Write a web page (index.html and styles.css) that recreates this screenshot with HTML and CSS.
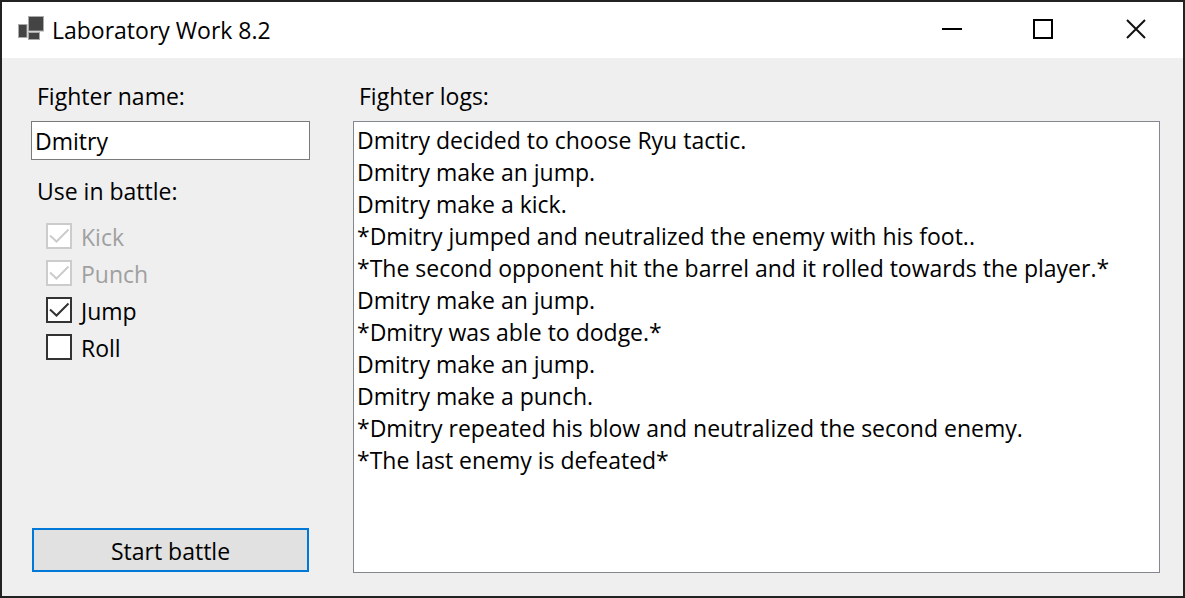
FILE: index.html
```html
<!DOCTYPE html>
<html lang="en">
<head>
<meta charset="utf-8">
<title>Laboratory Work 8.2</title>
<link rel="stylesheet" href="styles.css">
</head>
<body>
<div class="window">
  <header class="titlebar">
    <svg class="app-icon" width="26" height="24" viewBox="0 0 26 24" aria-hidden="true">
      <g fill="#444" stroke="#aaa" stroke-width="1">
        <rect x="0.5" y="8.5" width="8.5" height="13"/>
        <rect x="10.5" y="0.5" width="15" height="14.5"/>
        <rect x="10.5" y="16.5" width="11" height="7"/>
      </g>
    </svg>
    <h1 class="title">Laboratory Work 8.2</h1>
    <div class="controls">
      <button class="control" type="button" aria-label="Minimize">
        <svg width="22" height="22" viewBox="0 0 22 22"><path d="M1 11H21" stroke="#000" stroke-width="2"/></svg>
      </button>
      <button class="control" type="button" aria-label="Maximize">
        <svg width="22" height="22" viewBox="0 0 22 22"><rect x="1" y="2" width="18" height="18" fill="none" stroke="#000" stroke-width="2"/></svg>
      </button>
      <button class="control" type="button" aria-label="Close">
        <svg width="22" height="22" viewBox="0 0 22 22"><path d="M2 2L20 20M20 2L2 20" stroke="#111" stroke-width="2"/></svg>
      </button>
    </div>
  </header>
  <main class="content">
    <form class="panel">
      <label class="label" for="name">Fighter name:</label>
      <input class="name-input" id="name" type="text" value="Dmitry">
      <fieldset class="moves">
        <legend class="label moves-title">Use in battle:</legend>
        <label class="move"><input class="check" type="checkbox" checked disabled><svg class="tick" viewBox="0 0 26 26"><path d="M4 12.5L10.5 18.5L22.5 6.5"/></svg><span>Kick</span></label>
        <label class="move"><input class="check" type="checkbox" checked disabled><svg class="tick" viewBox="0 0 26 26"><path d="M4 12.5L10.5 18.5L22.5 6.5"/></svg><span>Punch</span></label>
        <label class="move"><input class="check" type="checkbox" checked><svg class="tick" viewBox="0 0 26 26"><path d="M4 12.5L10.5 18.5L22.5 6.5"/></svg><span>Jump</span></label>
        <label class="move"><input class="check" type="checkbox"><svg class="tick" viewBox="0 0 26 26"><path d="M4 12.5L10.5 18.5L22.5 6.5"/></svg><span>Roll</span></label>
      </fieldset>
      <button class="start" type="button">Start battle</button>
    </form>
    <section class="logs">
      <label class="label" for="log">Fighter logs:</label>
      <textarea class="log" id="log" readonly>Dmitry decided to choose Ryu tactic.
Dmitry make an jump.
Dmitry make a kick.
*Dmitry jumped and neutralized the enemy with his foot..
*The second opponent hit the barrel and it rolled towards the player.*
Dmitry make an jump.
*Dmitry was able to dodge.*
Dmitry make an jump.
Dmitry make a punch.
*Dmitry repeated his blow and neutralized the second enemy.
*The last enemy is defeated*</textarea>
    </section>
  </main>
</div>
</body>
</html>
```
FILE: styles.css
```css
* { box-sizing: border-box; }
body { margin: 0; }
body, input, textarea, button {
  font-family: "Segoe UI", "Open Sans", sans-serif;
  font-size: 23px;
  line-height: 32px;
  color: #000;
}
.window {
  display: flex;
  flex-direction: column;
  min-height: 100vh;
  border: 2px solid #222;
  background: #efefef;
}
.titlebar {
  display: flex;
  align-items: center;
  height: 56px;
  padding: 0 1px 0 16px;
  background: #fff;
}
.app-icon { margin-bottom: 4px; }
.title {
  flex: 1;
  margin: 0 0 0 8px;
  font-size: 23px;
  font-weight: 400;
}
.controls { display: flex; height: 100%; }
.control {
  display: flex;
  align-items: center;
  justify-content: center;
  width: 92px;
  padding: 0 0 2px;
  border: 0;
  background: transparent;
}
.content {
  flex: 1;
  display: flex;
  gap: 43px;
  padding: 22px 23px 23px 29px;
}
.panel {
  display: flex;
  flex-direction: column;
  width: 279px;
}
.label { padding-left: 6px; margin-bottom: 9px; }
.name-input {
  width: 100%;
  height: 39px;
  padding: 1px 3px 0;
  border: 1px solid #7a7a7a;
  border-radius: 0;
  background: #fff;
  outline: none;
}
.moves {
  margin: 15px 0 0;
  padding: 0;
  border: 0;
}
.moves-title { margin-bottom: 11px; }
.move {
  position: relative;
  display: flex;
  align-items: center;
  gap: 9px;
  height: 37px;
  padding-left: 15px;
}
.check {
  appearance: none;
  width: 26px;
  height: 26px;
  margin: 0 0 2px;
  border: 2px solid #333;
  background: #fff;
}
.tick {
  position: absolute;
  left: 15px;
  top: 5px;
  width: 26px;
  height: 26px;
  fill: none;
  stroke: #333;
  stroke-width: 2;
  visibility: hidden;
  pointer-events: none;
}
.check:checked + .tick { visibility: visible; }
.check:disabled { border-color: #ccc; }
.check:disabled + .tick { stroke: #ccc; }
.check:disabled ~ span { color: #a0a0a0; }
.start {
  height: 44px;
  margin: auto 1px 1px;
  padding: 2px 0 0;
  border: 2px solid #0078d7;
  background: #e1e1e1;
}
.logs {
  flex: 1;
  display: flex;
  flex-direction: column;
}
.log {
  flex: 1;
  width: 100%;
  padding: 2px 3px;
  border: 1px solid #828790;
  border-radius: 0;
  background: #fff;
  resize: none;
  outline: none;
}
```
